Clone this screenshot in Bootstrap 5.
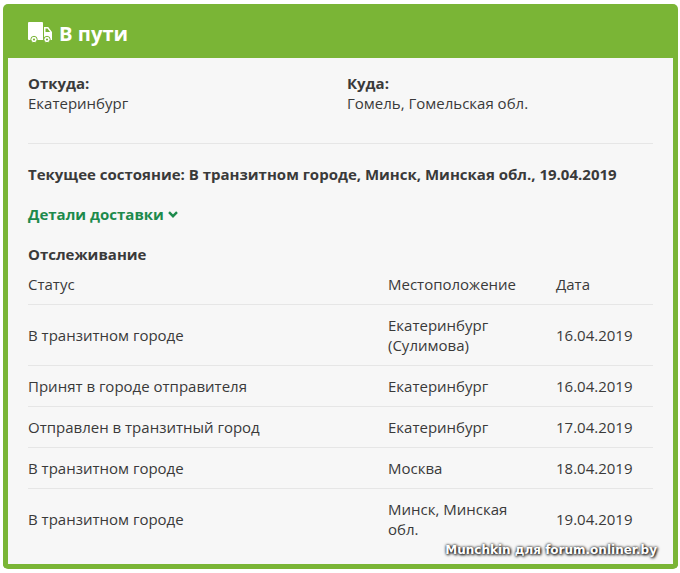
<!DOCTYPE html>
<html lang="ru">
<head>
  <meta charset="UTF-8" />
  <title>В пути</title>
  <link href="https://cdn.jsdelivr.net/npm/bootstrap@5.3.3/dist/css/bootstrap.min.css" rel="stylesheet"/>
  <style>
    body { font-family: "Open Sans", sans-serif; font-size: 15px; line-height: 20px; color: #3a3a3a; background: #fff; padding: 4px 2px 0 3px; height: 573px; overflow: hidden; position: relative; }
    .track-box { border: 5px solid #7ab536; border-top: 0; border-radius: 5px; background: #f7f7f7; height: 565px; overflow: hidden; }
    .track-head { background: #7ab536; color: #fff; height: 54px; margin: 0 -5px; padding: 4px 25px 0; font-size: 20.2px; font-weight: 700; gap: 7px; }
    .truck-ico { margin-top: -1px; }
    .track-body { padding: 15px 20px 0 20px; }
    .addr-row { height: 71px; border-bottom: 1px solid #e6e6e6; }
    .addr-col { width: 319px; }
    .now-line { margin-top: 20px; font-weight: 700; }
    .details-link { margin-top: 20px; color: #1d8a4c; font-weight: 700; font-size: 15px; text-decoration: none; }
    .track-title { margin-top: 20px; margin-bottom: 1px; font-weight: 700; }
    .track-table { --bs-table-bg: transparent; --bs-table-color: #3a3a3a; --bs-table-border-color: #e6e6e6; margin: 0; table-layout: fixed; }
    .track-table th, .track-table td { padding: 10px 0; vertical-align: middle; font-weight: 400; }
    .track-table th { padding: 9px 0 10px; }
    .track-table tr:last-child td { border-bottom: 0; }
    .col-loc { width: 168px; padding-right: 20px !important; }
    .col-date { width: 97px; }
    .sign { position: absolute; right: 23px; bottom: 16px; font-family: "DejaVu Sans", sans-serif; font-size: 12px; font-weight: 700; line-height: 14px; color: #fff; text-shadow: 0 0 3px #000, 1px 1px 3px #000; }
  </style>
</head>
<body>
  <div class="track-box">
    <div class="track-head d-flex align-items-center">
      <svg class="truck-ico" width="24" height="21" viewBox="0 0 24 21" aria-hidden="true">
        <path fill="#fff" fill-rule="evenodd" d="M1 0h13a1 1 0 0 1 1 1v17H1a1 1 0 0 1-1-1V1a1 1 0 0 1 1-1zM16 5h4.200l3.800 5v8h-8zm1.500 1.500V10h4.600l-2.600-3.500z"/>
        <circle cx="6" cy="17.500" r="3.200" fill="#fff" stroke="#7ab536"/><circle cx="6" cy="17.500" r="1.100" fill="#7ab536"/>
        <circle cx="19" cy="17.500" r="3.200" fill="#fff" stroke="#7ab536"/><circle cx="19" cy="17.500" r="1.100" fill="#7ab536"/>
      </svg>
      <span>В пути</span>
    </div>
    <div class="track-body">
      <div class="addr-row d-flex">
        <div class="addr-col"><strong class="d-block">Откуда:</strong>Екатеринбург</div>
        <div><strong class="d-block">Куда:</strong>Гомель, Гомельская обл.</div>
      </div>
      <div class="now-line">Текущее состояние: В транзитном городе, Минск, Минская обл., 19.04.2019</div>
      <a class="details-link d-flex align-items-center gap-1" href="#">Детали доставки
        <svg width="10" height="7" viewBox="0 0 10 7" aria-hidden="true"><path d="M1 1.200l4 4 4-4" fill="none" stroke="#1d8a4c" stroke-width="2.400"/></svg>
      </a>
      <div class="track-title">Отслеживание</div>
      <table class="table track-table">
        <thead>
          <tr><th>Статус</th><th class="col-loc">Местоположение</th><th class="col-date">Дата</th></tr>
        </thead>
        <tbody>
          <tr><td>В транзитном городе</td><td class="col-loc">Екатеринбург (Сулимова)</td><td>16.04.2019</td></tr>
          <tr><td>Принят в городе отправителя</td><td class="col-loc">Екатеринбург</td><td>16.04.2019</td></tr>
          <tr><td>Отправлен в транзитный город</td><td class="col-loc">Екатеринбург</td><td>17.04.2019</td></tr>
          <tr><td>В транзитном городе</td><td class="col-loc">Москва</td><td>18.04.2019</td></tr>
          <tr><td>В транзитном городе</td><td class="col-loc">Минск, Минская обл.</td><td>19.04.2019</td></tr>
        </tbody>
      </table>
    </div>
  </div>
  <div class="sign">Munchkin для forum.onliner.by</div>
  <script src="https://cdn.jsdelivr.net/npm/bootstrap@5.3.3/dist/js/bootstrap.bundle.min.js"></script>
</body>
</html>
